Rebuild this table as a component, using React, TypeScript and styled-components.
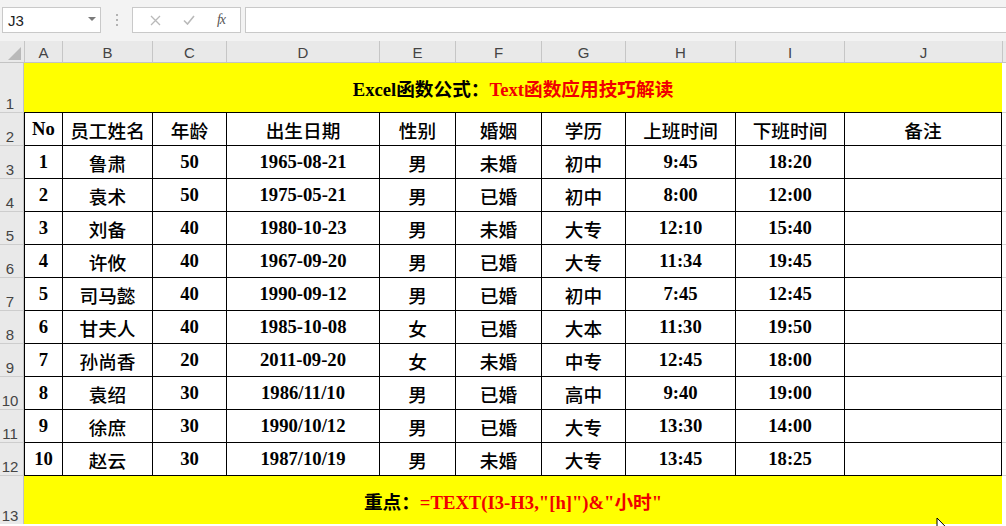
import React from "react";
import styled, { createGlobalStyle } from "styled-components";

const GlobalStyle = createGlobalStyle`
  html, body { margin: 0; padding: 0; background: #ffffff; overflow: hidden; }
  body { font-family: "Liberation Sans", Arial, sans-serif; }
  * { box-sizing: border-box; }
`;

const COLS = "24px 38px 90px 74px 153px 76px 86px 84px 110px 109px 158px 1fr";

const Page = styled.div`
  width: 1006px;
  height: 526px;
  position: relative;
  overflow: hidden;
`;

const FormulaBar = styled.div`
  height: 41px;
  background: #f3f3f3;
  display: flex;
  align-items: flex-start;
  padding: 7px 0 0 2px;
`;

const NameBox = styled.div`
  width: 99px;
  height: 26px;
  background: #fff;
  border: 1px solid #c9c9c9;
  display: flex;
  align-items: center;
  justify-content: space-between;
  padding: 0 4px 0 5px;
  font-size: 15px;
  color: #222;
`;

const Caret = styled.span`
  width: 0;
  height: 0;
  border-left: 4px solid transparent;
  border-right: 4px solid transparent;
  border-top: 4px solid #7a7a7a;
  margin-bottom: 2px;
`;

const Grip = styled.div`
  width: 31px;
  height: 26px;
  display: flex;
  flex-direction: column;
  align-items: center;
  justify-content: center;
  gap: 3px;
  & > span {
    width: 2px;
    height: 2px;
    background: #b3b3b3;
  }
`;

const FxBox = styled.div`
  width: 109px;
  height: 26px;
  background: #fff;
  border: 1px solid #c9c9c9;
  display: flex;
  align-items: center;
  justify-content: space-around;
  padding: 0 4px 0 6px;
`;

const Fx = styled.span`
  font-family: "Liberation Serif", serif;
  font-style: italic;
  font-size: 14px;
  color: #555;
  letter-spacing: -1px;
`;

const FormulaInput = styled.div`
  flex: 1;
  height: 26px;
  margin-left: 4px;
  background: #fff;
  border: 1px solid #c9c9c9;
  border-right: none;
`;

const HeaderRow = styled.div`
  display: grid;
  grid-template-columns: ${COLS};
  height: 22px;
  background: #e9e9e9;
  border-bottom: 1px solid #c3c3c3;
`;

const Corner = styled.div`
  display: flex;
  align-items: flex-end;
  justify-content: flex-end;
  padding: 0 3px 2px 0;
`;

const ColHead = styled.div`
  border-left: 1px solid #c6c6c6;
  display: flex;
  align-items: center;
  justify-content: center;
  font-size: 15px;
  color: #444;
  padding-top: 1px;
`;

const Row = styled.div<{ $h: number }>`
  display: grid;
  grid-template-columns: ${COLS};
  height: ${(p) => p.$h}px;
`;

const RowHead = styled.div<{ $top?: boolean }>`
  background: #e9e9e9;
  border-right: 1px solid #c3c3c3;
  border-top: ${(p) => (p.$top ? "1px solid #cdcdcd" : "none")};
  display: flex;
  align-items: flex-end;
  justify-content: center;
  padding: 0 3px 1px 0;
  font-size: 15px;
  line-height: 1;
  color: #444;
`;

const Banner = styled.div<{ $top?: boolean }>`
  grid-column: 2 / 12;
  background: #ffff00;
  border-top: ${(p) => (p.$top ? "1px solid #000" : "none")};
  display: flex;
  align-items: center;
  justify-content: center;
  font-family: "Liberation Serif", "Noto Sans CJK SC", serif;
  font-weight: 700;
  font-size: 18.67px;
  color: #000;
  white-space: pre;
`;

const Red = styled.span`
  color: #f00000;
`;

const Cell = styled.div<{ $cjk?: boolean; $last?: boolean }>`
  background: #fff;
  border-left: 1px solid #000;
  border-top: 1px solid #000;
  border-right: ${(p) => (p.$last ? "1px solid #000" : "none")};
  display: flex;
  align-items: center;
  justify-content: center;
  font-family: "Liberation Serif", "Noto Sans CJK SC", serif;
  font-size: 18.67px;
  font-weight: ${(p) => (p.$cjk ? 500 : 700)};
  color: #000;
  white-space: nowrap;
`;

const Spill = styled.div<{ $top?: boolean }>`
  background: #fff;
  border-top: ${(p) => (p.$top ? "1px solid #d6d6d6" : "none")};
`;

const Pointer = styled.svg`
  position: absolute;
  left: 936px;
  top: 517px;
`;

const letters = ["A", "B", "C", "D", "E", "F", "G", "H", "I", "J", ""];

const headers = ["No", "员工姓名", "年龄", "出生日期", "性别", "婚姻", "学历", "上班时间", "下班时间", "备注"];

const data: string[][] = [
  ["1", "鲁肃", "50", "1965-08-21", "男", "未婚", "初中", "9:45", "18:20", ""],
  ["2", "袁术", "50", "1975-05-21", "男", "已婚", "初中", "8:00", "12:00", ""],
  ["3", "刘备", "40", "1980-10-23", "男", "未婚", "大专", "12:10", "15:40", ""],
  ["4", "许攸", "40", "1967-09-20", "男", "已婚", "大专", "11:34", "19:45", ""],
  ["5", "司马懿", "40", "1990-09-12", "男", "已婚", "初中", "7:45", "12:45", ""],
  ["6", "甘夫人", "40", "1985-10-08", "女", "已婚", "大本", "11:30", "19:50", ""],
  ["7", "孙尚香", "20", "2011-09-20", "女", "未婚", "中专", "12:45", "18:00", ""],
  ["8", "袁绍", "30", "1986/11/10", "男", "已婚", "高中", "9:40", "19:00", ""],
  ["9", "徐庶", "30", "1990/10/12", "男", "已婚", "大专", "13:30", "14:00", ""],
  ["10", "赵云", "30", "1987/10/19", "男", "未婚", "大专", "13:45", "18:25", ""],
];

const isCjk = (s: string) => /[\u4e00-\u9fff]/.test(s);

export default function App() {
  const rows = [headers, ...data];
  return (
    <Page>
      <GlobalStyle />
      <FormulaBar>
        <NameBox>
          <span>J3</span>
          <Caret />
        </NameBox>
        <Grip>
          <span />
          <span />
          <span />
        </Grip>
        <FxBox>
          <svg width="11" height="11" viewBox="0 0 11 11">
            <path d="M1 1 L10 10 M10 1 L1 10" stroke="#b9b9b9" strokeWidth="1.3" fill="none" />
          </svg>
          <svg width="12" height="10" viewBox="0 0 12 10">
            <path d="M1 5.5 L4.5 9 L11 1" stroke="#b9b9b9" strokeWidth="1.6" fill="none" />
          </svg>
          <Fx>fx</Fx>
        </FxBox>
        <FormulaInput />
      </FormulaBar>

      <HeaderRow>
        <Corner>
          <svg width="13" height="13" viewBox="0 0 13 13">
            <polygon points="13,0 13,13 0,13" fill="#b9b9b9" />
          </svg>
        </Corner>
        {letters.map((l, i) => (
          <ColHead key={i}>{l}</ColHead>
        ))}
      </HeaderRow>

      <Row $h={49}>
        <RowHead>1</RowHead>
        <Banner>
          Excel函数公式：<Red>Text函数应用技巧解读</Red>
        </Banner>
        <Spill />
      </Row>

      {rows.map((r, ri) => (
        <Row $h={33} key={ri}>
          <RowHead $top>{ri + 2}</RowHead>
          {r.map((v, ci) => (
            <Cell key={ci} $cjk={isCjk(v)} $last={ci === r.length - 1}>
              {v}
            </Cell>
          ))}
          <Spill $top />
        </Row>
      ))}

      <Row $h={49}>
        <RowHead $top>13</RowHead>
        <Banner $top>
          重点：<Red>=TEXT(I3-H3,"[h]")&amp;"小时"</Red>
        </Banner>
        <Spill $top />
      </Row>

      <Pointer width="14" height="20" viewBox="0 0 14 20">
        <path d="M1 1 L1 16 L4.5 12.5 L7 18 L9 17 L6.7 11.7 L11.5 11.7 Z" fill="#fff" stroke="#000" strokeWidth="1" />
      </Pointer>
    </Page>
  );
}
